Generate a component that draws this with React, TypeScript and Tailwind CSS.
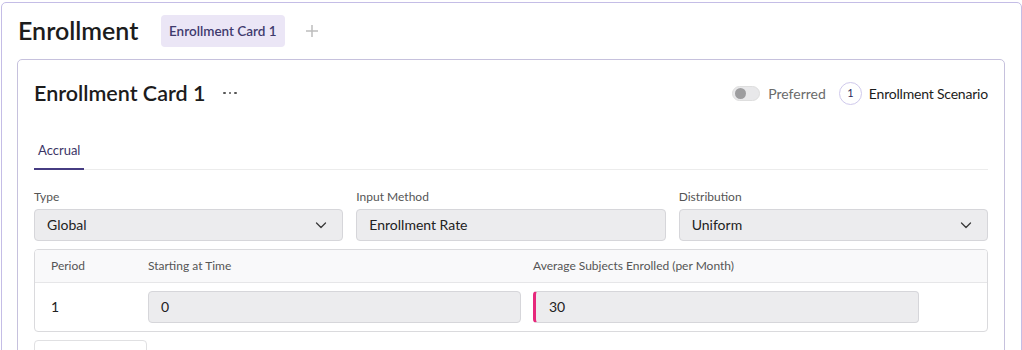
import React from "react";

const font = { fontFamily: '"Source Sans Pro", Lato, "Liberation Sans", sans-serif' };

function Chevron() {
  return (
    <svg width="14" height="14" viewBox="0 0 14 14" fill="none" className="shrink-0">
      <path d="M2.5 5 L7 9.5 L11.5 5" stroke="#3a3a3a" strokeWidth="1.3" strokeLinecap="round" strokeLinejoin="round" />
    </svg>
  );
}

function Field({ label, value, select }: { label: string; value: string; select?: boolean }) {
  return (
    <div className="flex flex-col">
      <div className="text-[12px] leading-[16px] text-[#555] mb-[4px]">{label}</div>
      <div className="h-[32px] rounded-[4px] border border-[#d6d6da] bg-[#ececee] flex items-center justify-between pl-[12px] pr-[14px]">
        <span className="text-[14px] text-[#222] pb-[2px]">{value}</span>
        {select && <Chevron />}
      </div>
    </div>
  );
}

export default function App() {
  return (
    <div className="bg-white w-[1022px] h-[350px] overflow-hidden pt-[2px] pl-[1px]" style={font}>
      <div className="border border-[#c4bde6] rounded-[5px] h-[400px] pl-[15px] pr-[16px]">
        <div className="flex items-center h-[56px]">
          <div className="text-[25px] font-semibold text-[#1c1c1c] pl-[1px] w-[144px]">Enrollment</div>
          <div className="h-[32px] px-[8px] rounded-[4px] bg-[#ebe6f6] flex items-center text-[13.5px] font-semibold text-[#3f3a6e]">
            Enrollment Card 1
          </div>
          <div className="ml-[20px]">
            <svg width="14" height="14" viewBox="0 0 14 14">
              <path d="M7 1 V13 M1 7 H13" stroke="#bdbdbd" strokeWidth="1.5" />
            </svg>
          </div>
        </div>
        <div className="border border-[#c6c1dd] rounded-[5px] px-[16px] pt-[18px] h-[340px]">
          <div className="flex items-center justify-between h-[30px]">
            <div className="flex items-center">
              <div className="text-[21.5px] font-semibold text-[#1c1c1c]">Enrollment Card 1</div>
              <div className="ml-[18px] flex gap-[3px] items-center">
                <span className="w-[2.5px] h-[2.5px] rounded-full bg-[#555]" />
                <span className="w-[2.5px] h-[2.5px] rounded-full bg-[#555]" />
                <span className="w-[2.5px] h-[2.5px] rounded-full bg-[#555]" />
              </div>
            </div>
            <div className="flex items-center">
              <div className="w-[28px] h-[15px] rounded-full bg-[#e8e8ea] border border-[#dedede] flex items-center pl-[2px]">
                <span className="w-[11px] h-[11px] rounded-full bg-[#9d9d9f]" />
              </div>
              <span className="ml-[8px] text-[14px] text-[#6b6b6b]">Preferred</span>
              <span className="ml-[13px] w-[23px] h-[23px] rounded-full border border-[#cfc9ec] flex items-center justify-center text-[11px] text-[#2d2a5a]">1</span>
              <span className="ml-[7px] text-[14px] text-[#1c1c1c] tracking-[-0.2px]">Enrollment Scenario</span>
            </div>
          </div>
          <div className="mt-[22px] h-[40px] border-b border-[#ececec] flex items-end">
            <div className="h-[40px] px-[4px] pt-[4px] flex items-center border-b-2 border-[#463c82] mb-[-1px] text-[13px] text-[#3b3566]">
              Accrual
            </div>
          </div>
          <div className="mt-[19px] grid grid-cols-3 gap-[13px]">
            <Field label="Type" value="Global" select />
            <Field label="Input Method" value="Enrollment Rate" />
            <Field label="Distribution" value="Uniform" select />
          </div>
          <div className="mt-[8px] border border-[#dadadd] rounded-[4px] overflow-hidden">
            <div className="h-[33px] bg-[#f9f9fa] border-b border-[#e6e6e8] flex items-center text-[12px] text-[#555]">
              <div className="w-[113px] pl-[16px]">Period</div>
              <div className="w-[385px]">Starting at Time</div>
              <div>Average Subjects Enrolled (per Month)</div>
            </div>
            <div className="h-[48px] flex items-center text-[14px] text-[#222]">
              <div className="w-[113px] pl-[16px] pb-[2px]">1</div>
              <div className="w-[385px]">
                <div className="w-[373px] h-[32px] rounded-[4px] border border-[#d6d6da] bg-[#ececee] flex items-center pl-[12px] pb-[2px]">0</div>
              </div>
              <div className="w-[386px] h-[32px] rounded-[4px] border border-[#d6d6da] border-l-[3px] border-l-[#e6287b] bg-[#ececee] flex items-center pl-[13px] pb-[2px]">30</div>
            </div>
          </div>
          <div className="mt-[8px] w-[113px] h-[30px] rounded-[4px] border border-[#e0e0e2]" />
        </div>
      </div>
    </div>
  );
}
